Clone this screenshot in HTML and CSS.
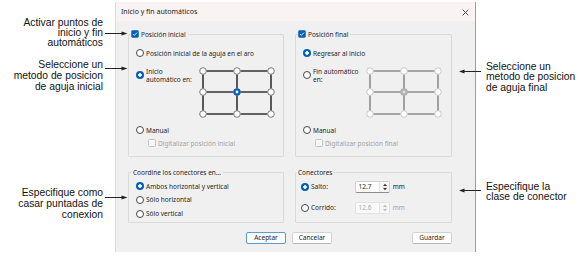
FILE: index.html
```html
<!DOCTYPE html>
<html lang="es">
<head>
<meta charset="utf-8">
<title>Inicio y fin automáticos</title>
<link rel="stylesheet" href="styles.css">
</head>
<body>
<div class="stage">
  <div class="dialog">
    <div class="titlebar">
      <span class="title">Inicio y fin automáticos</span>
      <svg class="close" width="7" height="7" viewBox="0 0 7 7"><path d="M0.6 0.6L6.4 6.4M6.4 0.6L0.6 6.4" stroke="#3a3a3a" stroke-width="0.9"/></svg>
    </div>
    <div class="content">
      <div class="groups">
        <fieldset class="group top">
          <legend class="cb-legend"><svg class="check" width="8" height="8" viewBox="0 0 8 8"><rect x="0.25" y="0.25" width="7.5" height="7.5" rx="1.4" fill="#005fb8"/><path d="M2 4.1L3.3 5.4L6 2.6" stroke="#fff" stroke-width="0.9" fill="none"/></svg><span>Posición inicial</span></legend>
          <div class="opt"><span class="radio"></span><span>Posición inicial de la aguja en el aro</span></div>
          <div class="opt auto">
            <span class="radio on"></span>
            <span class="auto-label">Inicio<br>automático en:</span>
            <svg class="grid" width="76" height="51" viewBox="0 0 76 51">
              <path d="M7.5 4H34.5M41.5 4H68.5M7.5 25H34.5M41.5 25H68.5M7.5 47H34.5M41.5 47H68.5M4 7.5V21.5M4 28.5V43.5M38 7.5V21.5M38 28.5V43.5M72 7.5V21.5M72 28.5V43.5" stroke="#333" stroke-width="1.6"/>
              <g fill="#fff" stroke="#5a5a5a" stroke-width="0.8">
                <circle cx="4" cy="4" r="3.3"/><circle cx="38" cy="4" r="3.3"/><circle cx="72" cy="4" r="3.3"/>
                <circle cx="4" cy="25" r="3.3"/><circle cx="72" cy="25" r="3.3"/>
                <circle cx="4" cy="47" r="3.3"/><circle cx="38" cy="47" r="3.3"/><circle cx="72" cy="47" r="3.3"/>
              </g>
              <circle cx="38" cy="25" r="3.7" fill="#005fb8"/><circle cx="38" cy="25" r="1.4" fill="#fff"/>
            </svg>
          </div>
          <div class="opt manual"><span class="radio"></span><span>Manual</span></div>
          <div class="opt digit disabled"><span class="box"></span><span>Digitalizar posición inicial</span></div>
        </fieldset>

        <fieldset class="group top">
          <legend class="cb-legend"><svg class="check" width="8" height="8" viewBox="0 0 8 8"><rect x="0.25" y="0.25" width="7.5" height="7.5" rx="1.4" fill="#005fb8"/><path d="M2 4.1L3.3 5.4L6 2.6" stroke="#fff" stroke-width="0.9" fill="none"/></svg><span>Posición final</span></legend>
          <div class="opt"><span class="radio on"></span><span>Regresar al inicio</span></div>
          <div class="opt auto">
            <span class="radio"></span>
            <span class="auto-label">Fin automático<br>en:</span>
            <svg class="grid" width="76" height="51" viewBox="0 0 76 51">
              <path d="M7.5 4H34.5M41.5 4H68.5M7.5 25H34.5M41.5 25H68.5M7.5 47H34.5M41.5 47H68.5M4 7.5V21.5M4 28.5V43.5M38 7.5V21.5M38 28.5V43.5M72 7.5V21.5M72 28.5V43.5" stroke="#8c8c8c" stroke-width="1.6"/>
              <g fill="#fff" stroke="#bdbdbd" stroke-width="0.8">
                <circle cx="4" cy="4" r="3.3"/><circle cx="38" cy="4" r="3.3"/><circle cx="72" cy="4" r="3.3"/>
                <circle cx="4" cy="25" r="3.3"/><circle cx="72" cy="25" r="3.3"/>
                <circle cx="4" cy="47" r="3.3"/><circle cx="38" cy="47" r="3.3"/><circle cx="72" cy="47" r="3.3"/>
              </g>
              <circle cx="38" cy="25" r="3.6" fill="#b4b4b4" stroke="#a0a0a0" stroke-width="0.6"/><circle cx="38" cy="25" r="1.3" fill="#dedede"/>
            </svg>
          </div>
          <div class="opt manual"><span class="radio"></span><span>Manual</span></div>
          <div class="opt digit disabled"><span class="box"></span><span>Digitalizar posición final</span></div>
        </fieldset>

        <fieldset class="group coord">
          <legend class="txt-legend">Coordine los conectores en…</legend>
          <div class="opt"><span class="radio on"></span><span>Ambos horizontal y vertical</span></div>
          <div class="opt"><span class="radio"></span><span>Sólo horizontal</span></div>
          <div class="opt"><span class="radio"></span><span>Sólo vertical</span></div>
        </fieldset>

        <fieldset class="group conn">
          <legend class="txt-legend">Conectores</legend>
          <div class="opt spin-row">
            <span class="radio on"></span><span class="conn-label">Salto:</span>
            <span class="spin"><span class="val">12.7</span><span class="btns"><svg width="8" height="10" viewBox="0 0 8 10"><path d="M2 4L4 1.8L6 4Z M2 6L4 8.2L6 6Z" fill="#333"/><path d="M1 5H7" stroke="#d8d8d8" stroke-width="0.6"/></svg></span></span>
            <span class="unit">mm</span>
          </div>
          <div class="opt spin-row second">
            <span class="radio"></span><span class="conn-label">Corrido:</span>
            <span class="spin disabled"><span class="val">12.6</span><span class="btns"><svg width="8" height="10" viewBox="0 0 8 10"><path d="M2 4L4 1.8L6 4Z M2 6L4 8.2L6 6Z" fill="#b8b8b8"/><path d="M1 5H7" stroke="#e4e4e4" stroke-width="0.6"/></svg></span></span>
            <span class="unit disabled">mm</span>
          </div>
        </fieldset>
      </div>

      <div class="buttons">
        <button class="btn default">Aceptar</button>
        <button class="btn cancel">Cancelar</button>
        <button class="btn">Guardar</button>
      </div>
    </div>
  </div>

  <p class="callout left c1">Activar puntos de<br>inicio y fin<br>automáticos</p>
  <svg class="arrow right-pt a1" width="23" height="5" viewBox="0 0 23 5"><path d="M0 2.5H18" stroke="#222" stroke-width="1"/><path d="M16.5 0.6L22.5 2.5L16.5 4.4Z" fill="#222"/></svg>

  <p class="callout left c2">Seleccione un<br>metodo de posicion<br>de aguja inicial</p>
  <svg class="arrow right-pt a2" width="23" height="5" viewBox="0 0 23 5"><path d="M0 2.5H18" stroke="#222" stroke-width="1"/><path d="M16.5 0.6L22.5 2.5L16.5 4.4Z" fill="#222"/></svg>

  <p class="callout left c3">Especifique como<br>casar puntadas de<br>conexion</p>
  <svg class="arrow right-pt a3" width="23" height="5" viewBox="0 0 23 5"><path d="M0 2.5H18" stroke="#222" stroke-width="1"/><path d="M16.5 0.6L22.5 2.5L16.5 4.4Z" fill="#222"/></svg>

  <p class="callout right c4">Seleccione un<br>metodo de posicion<br>de aguja final</p>
  <svg class="arrow left-pt a4" width="22" height="5" viewBox="0 0 22 5"><path d="M4 2.5H22" stroke="#222" stroke-width="1"/><path d="M5.5 0.6L0 2.5L5.5 4.4Z" fill="#222"/></svg>

  <p class="callout right c5">Especifique la<br>clase de conector</p>
  <svg class="arrow left-pt a5" width="22" height="5" viewBox="0 0 22 5"><path d="M4 2.5H22" stroke="#222" stroke-width="1"/><path d="M5.5 0.6L0 2.5L5.5 4.4Z" fill="#222"/></svg>
</div>
</body>
</html>
```

FILE: styles.css
```css
* { box-sizing: border-box; }

html, body {
  margin: 0;
  padding: 0;
  background: #ffffff;
}

body {
  width: 580px;
  height: 267px;
  overflow: hidden;
  font-family: "Noto Sans", "Open Sans", sans-serif;
  color: #1f1f1f;
}

.stage {
  position: relative;
  height: 267px;
  padding: 2px 0 0 115px;
}

/* ---------- dialog ---------- */
.dialog {
  width: 361px;
  height: 250px;
  background: #f0f0f0;
  border-left: 1px solid #dcdcdc;
  border-right: 1px solid #9e9e9e;
  display: flex;
  flex-direction: column;
}

.titlebar {
  height: 19px;
  flex: none;
  background: #faf3f3;
  display: flex;
  align-items: center;
  justify-content: space-between;
  padding: 0 6px 0 5px;
}

.title {
  font-size: 7px;
  line-height: 9px;
  color: #222;
}

.close { display: block; margin-top: 1px; }

.content {
  padding: 8.5px 23px 0 12px;
}

.groups {
  display: grid;
  grid-template-columns: 156px 157px;
  column-gap: 11px;
  row-gap: 11px;
}

fieldset.group {
  margin: 0;
  min-width: 0;
  border: 1px solid #dadada;
  border-radius: 1px;
  padding: 0 0 0 7px;
  font-size: 6.5px;
  line-height: 9px;
  color: #1f1f1f;
}

legend {
  height: 9px;
  line-height: 9px;
  font-size: 6.5px;
  color: #1f1f1f;
}

.cb-legend {
  display: flex;
  align-items: center;
  gap: 2px;
  margin-left: -5px;
  padding: 0 2px 0 0;
}

.txt-legend {
  margin-left: -5px;
  padding: 0 2px;
}

.check { display: block; flex: none; }

.group.top { padding-top: 10px; padding-bottom: 8px; }
.group.coord { padding-top: 5px; padding-bottom: 4px; }
.group.coord .opt + .opt { margin-top: 4.8px; }
.group.conn { padding-top: 4px; padding-left: 5px; }

.opt {
  display: flex;
  align-items: center;
  height: 9px;
  white-space: nowrap;
}

.radio {
  flex: none;
  width: 8px;
  height: 8px;
  margin-right: 2px;
  border-radius: 50%;
  border: 1px solid #464646;
  background: #fff;
}

.radio.on {
  border: none;
  background: radial-gradient(circle at center, #fff 0 1.5px, #005fb8 1.9px);
}

.opt.auto {
  height: auto;
  align-items: flex-start;
  margin-top: 9px;
}

.opt.auto .radio { margin-top: 4.3px; }

.auto-label {
  width: 53px;
  margin-top: 1.3px;
  line-height: 8px;
}

.grid { display: block; flex: none; }

.opt.manual { margin-top: 8px; }

.opt.digit {
  margin-top: 4px;
  margin-left: 12px;
}

.box {
  flex: none;
  width: 8px;
  height: 8px;
  margin-right: 2px;
  border: 1px solid #c4c4c4;
  border-radius: 1.5px;
  background: #f6f6f6;
}

.disabled { color: #a3a3a3; }

/* connectors */
.spin-row { height: 12px; }
.spin-row.second { margin-top: 9px; }

.conn-label { width: 44px; }

.spin {
  display: flex;
  width: 35px;
  height: 12px;
  border: 1px solid #d0d0d0;
  border-bottom-color: #8c8c8c;
  border-radius: 2px;
  background: #fff;
  color: #1f1f1f;
}

.spin .val {
  flex: 1;
  padding-left: 2.5px;
  line-height: 10px;
}

.spin .btns {
  width: 10px;
  display: flex;
  align-items: center;
  justify-content: center;
  border-left: 1px solid #e2e2e2;
  background: #f7f7f7;
}

.spin .btns svg { display: block; }

.spin.disabled {
  border-color: #e2e2e2;
  background: #fafafa;
  color: #a8a8a8;
}

.unit { margin-left: 2.7px; }

/* buttons */
.buttons {
  display: flex;
  justify-content: flex-end;
  margin-top: 8.5px;
}

.btn {
  width: 40px;
  height: 12.5px;
  padding: 0;
  font-family: inherit;
  font-size: 6.5px;
  line-height: 10px;
  color: #1f1f1f;
  background: #fdfdfd;
  border: 1px solid #d2d2d2;
  border-bottom-color: #b8b8b8;
  border-radius: 2px;
}

.btn.default {
  border-color: #5b9bd8;
  margin-right: 6px;
}

.btn.cancel { margin-right: 80px; }

/* ---------- callouts ---------- */
.callout {
  position: absolute;
  margin: 0;
  font-family: "Liberation Sans", Arial, sans-serif;
  font-size: 10.3px;
  color: #111;
}

.callout.left { left: 0; width: 103px; text-align: right; }
.callout.right { left: 486px; text-align: left; }

.c1 { top: 17.5px; line-height: 10.4px; }
.c2 { top: 58.5px; line-height: 11px; }
.c3 { top: 188.4px; line-height: 10.8px; }
.c4 { top: 61.8px; line-height: 10.4px; }
.c5 { top: 181.5px; line-height: 10.4px; }

.arrow { position: absolute; display: block; }
.right-pt { left: 105px; }
.left-pt { left: 459px; }

.a1 { top: 30.5px; }
.a2 { top: 65.8px; }
.a3 { top: 195.2px; }
.a4 { top: 68.5px; }
.a5 { top: 188.2px; }
```
